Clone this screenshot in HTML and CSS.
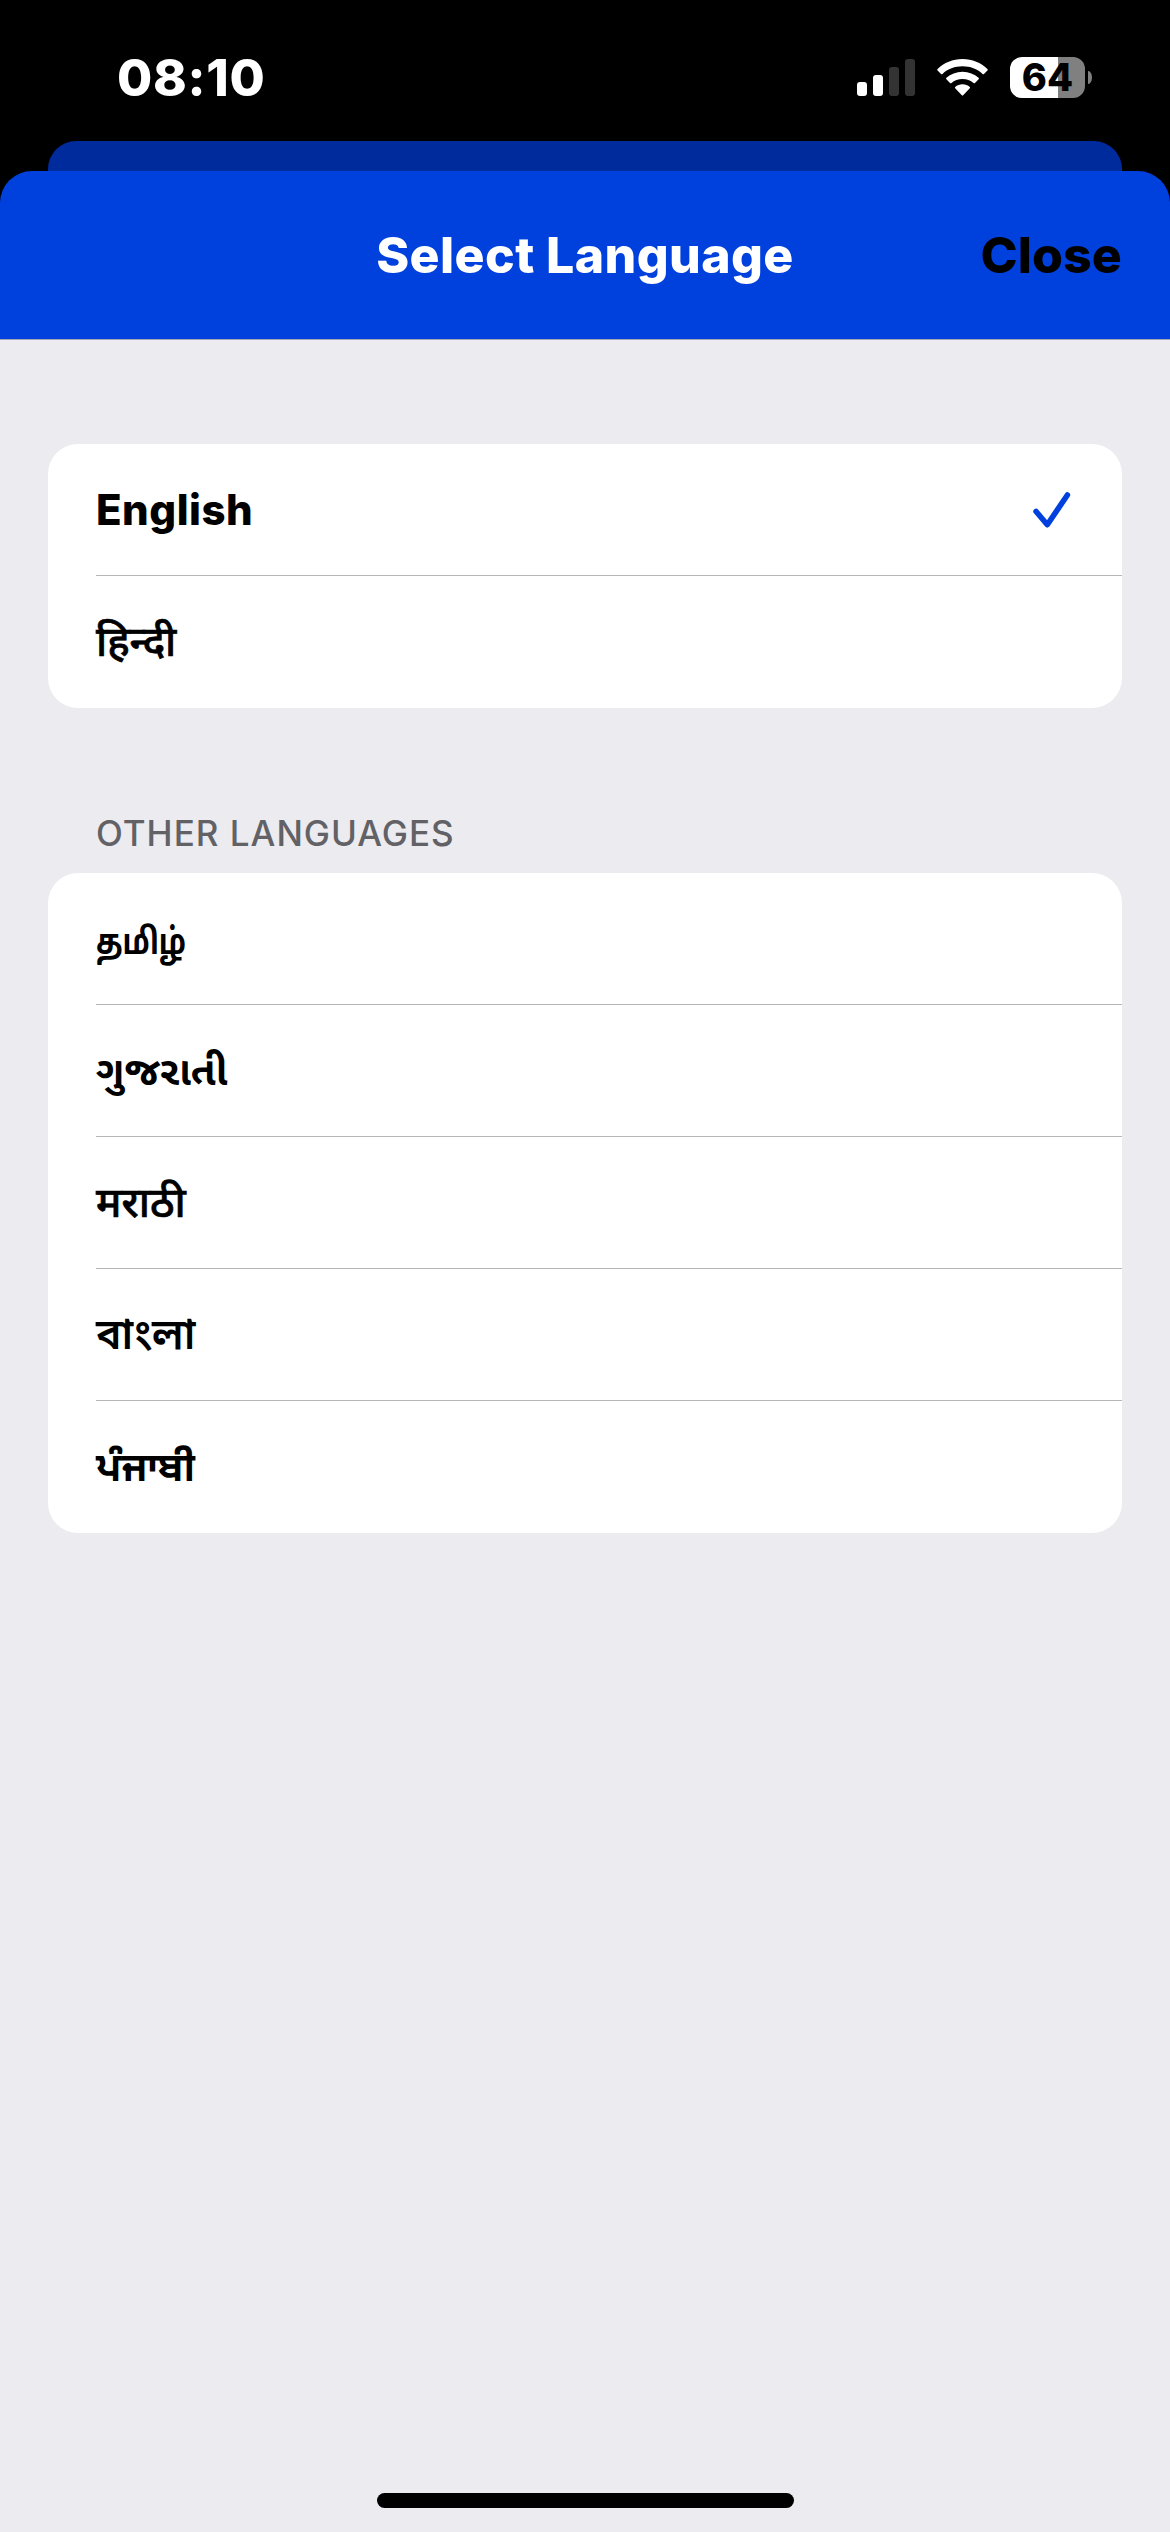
FILE: index.html
```html
<!DOCTYPE html>
<html lang="en">
<head>
<meta charset="utf-8">
<title>Select Language</title>
<link rel="stylesheet" href="styles.css">
</head>
<body>
<div class="screen">
  <div class="status-bar">
    <span class="time">08:10</span>
    <div class="indicators">
      <svg class="signal" width="58" height="37" viewBox="0 0 58 37">
        <rect x="0" y="23" width="10" height="14" rx="3" fill="#fff"/>
        <rect x="16" y="16" width="10" height="21" rx="3" fill="#fff"/>
        <rect x="32" y="8" width="10" height="29" rx="3" fill="#333"/>
        <rect x="48" y="0" width="10" height="37" rx="3" fill="#333"/>
      </svg>
      <svg class="wifi" width="51" height="37" viewBox="0 0 51 37" fill="#fff">
        <path d="M25.500 0C35.300 0 44 3.700 50.400 10Q51.200 10.800 50.400 11.600L47 15Q46.300 15.600 45.500 14.900C40.200 10 33.200 7.300 25.500 7.300S10.800 10 5.500 14.900Q4.700 15.600 4 15L.6 11.600Q-.2 10.800.6 10C7 3.700 15.700 0 25.500 0Z"/>
        <path d="M25.500 12.700C31.800 12.700 37.300 15 41.600 18.800Q42.400 19.500 41.600 20.300L38 23.900Q37.300 24.500 36.500 23.900C33.600 21.500 29.800 20 25.500 20S17.400 21.500 14.500 23.900Q13.700 24.500 13 23.900L9.400 20.300Q8.600 19.500 9.400 18.800C13.700 15 19.200 12.700 25.500 12.700Z"/>
        <path d="M25.500 25.300C28.300 25.300 30.900 26.300 32.800 27.900Q33.500 28.600 32.800 29.300L26.400 36Q25.500 37 24.600 36L18.200 29.300Q17.500 28.600 18.200 27.900C20.100 26.300 22.700 25.300 25.500 25.300Z"/>
      </svg>
      <div class="battery">
        <div class="battery-body">64</div>
        <div class="battery-nub"></div>
      </div>
    </div>
  </div>
  <div class="back-sheet"></div>
  <main class="sheet">
    <header class="nav">
      <h1 class="title">Select Language</h1>
      <span class="close">Close</span>
    </header>
    <div class="content">
      <ul class="card">
        <li class="row"><span class="name">English</span>
          <svg class="check" width="38" height="36" viewBox="0 0 38 36"><path d="M3.100 19.500L14.300 32.700L34.400 3" fill="none" stroke="#0040dd" stroke-width="5.600" stroke-linecap="round" stroke-linejoin="round"/></svg>
        </li>
        <li class="row"><span class="name hindi" lang="hi">हिन्दी</span></li>
      </ul>
      <h2 class="section-title">OTHER LANGUAGES</h2>
      <ul class="card">
        <li class="row"><span class="name tamil" lang="ta">தமிழ்</span></li>
        <li class="row"><span class="name gujarati" lang="gu">ગુજરાતી</span></li>
        <li class="row"><span class="name marathi" lang="mr">मराठी</span></li>
        <li class="row"><span class="name bengali" lang="bn">বাংলা</span></li>
        <li class="row"><span class="name punjabi" lang="pa">ਪੰਜਾਬੀ</span></li>
      </ul>
    </div>
    <div class="home-indicator"></div>
  </main>
</div>
</body>
</html>
```
FILE: styles.css
```css
* { box-sizing: border-box; margin: 0; padding: 0; }
body { background: #000; font-family: Inter, "Noto Sans", sans-serif; }
.screen { width: 1170px; height: 2532px; display: flex; flex-direction: column; overflow: hidden; }
.status-bar { height: 141px; flex: none; display: flex; justify-content: space-between; align-items: flex-start; padding: 57px 78px 0 117px; color: #fff; }
.time { font-size: 51px; font-weight: 800; line-height: 42px; letter-spacing: 0.7px; }
.indicators { display: flex; align-items: flex-start; }
.signal { margin: 2px 22px 0 0; }
.wifi { margin: 2px 22px 0 0; }
.battery { display: flex; align-items: center; gap: 3px; }
.battery-body { width: 75px; height: 41px; border-radius: 12px; background: linear-gradient(90deg, #fff 48px, #808080 48px); color: #000; font-size: 38px; font-weight: 800; line-height: 41px; text-align: center; }
.battery-nub { width: 4px; height: 13px; border-radius: 0 4px 4px 0 / 0 7px 7px 0; background: #808080; }
.back-sheet { height: 30px; flex: none; margin: 0 48px; border-radius: 28px 28px 0 0; background: #002b9c; }
.sheet { flex: 1; display: flex; flex-direction: column; background: linear-gradient(#0040dd 168px, #ebebf0 168px); border-radius: 32px 32px 0 0; }
.nav { height: 169px; flex: none; display: grid; grid-template-columns: 1fr auto 1fr; align-items: center; padding: 0 48px; border-bottom: 1px solid #a5a6b5; }
.title { grid-column: 2; color: #fff; font-size: 50px; font-weight: 800; line-height: 60px; letter-spacing: 0.4px; }
.close { justify-self: end; color: #000; font-size: 50px; font-weight: 800; line-height: 60px; letter-spacing: 0.1px; }
.content { flex: 1; padding: 104px 48px 0; }
.card { list-style: none; background: #fff; border-radius: 30px; }
.row { height: 132px; display: flex; align-items: center; justify-content: space-between; margin-left: 48px; padding-right: 51px; border-bottom: 1px solid #b6b6b8; }
.row:last-child { border-bottom: 0; }
.name { color: #000; font-size: 42px; font-weight: 800; line-height: 60px; letter-spacing: 0.5px; white-space: nowrap; }
.section-title { height: 165px; padding: 103px 0 0 48px; color: #616166; font-size: 35px; font-weight: 500; line-height: 44px; letter-spacing: 1px; }
.hindi, .marathi, .tamil, .gujarati, .bengali, .punjabi { letter-spacing: 0; }
.hindi, .marathi { font-size: 41.5px; font-weight: 500; line-height: 58px; padding-bottom: 2px; -webkit-text-stroke: 0.7px #000; }
.tamil { font-family: "Noto Sans Tamil", Inter, sans-serif; font-size: 36px; font-weight: 700; padding-top: 12px; transform: scaleX(0.81); transform-origin: left center; }
.gujarati { font-family: "Noto Sans Gujarati", Inter, sans-serif; font-size: 40px; font-weight: 700; padding-top: 9px; }
.bengali { font-family: "Noto Sans Bengali", Inter, sans-serif; font-size: 42.5px; font-weight: 600; padding-top: 6px; }
.punjabi { font-family: "Noto Sans Gurmukhi", Inter, sans-serif; font-size: 39.5px; font-weight: 700; padding-top: 10px; }
.home-indicator { width: 417px; height: 15px; margin: 0 auto 24px; border-radius: 8px; background: #000; }
```
